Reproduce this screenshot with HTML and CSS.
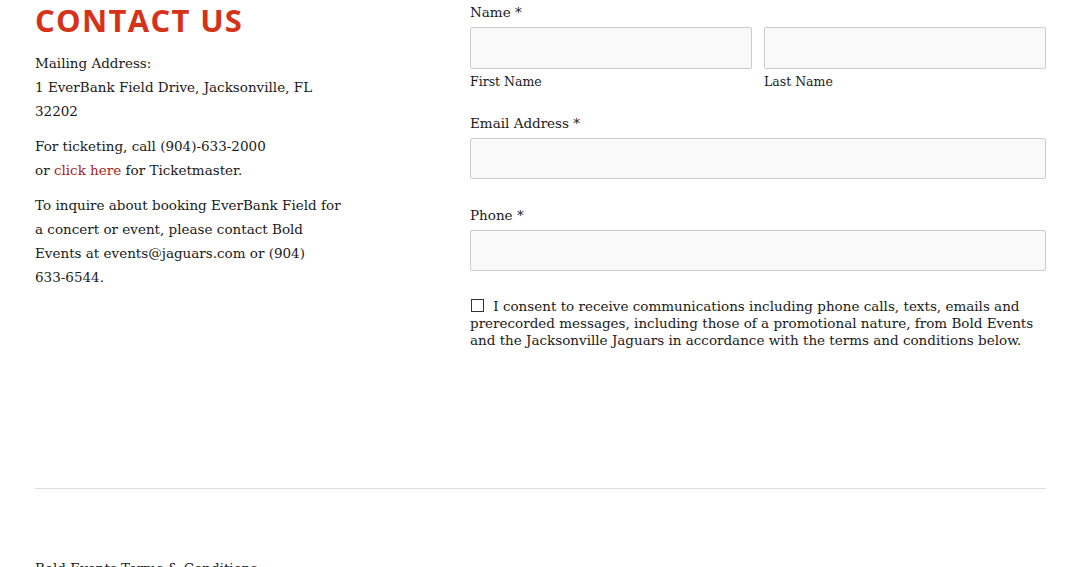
FILE: index.html
```html
<!DOCTYPE html>
<html lang="en">
<head>
  <meta charset="UTF-8">
  <title>Contact Us</title>
  <link rel="stylesheet" href="styles.css">
</head>
<body>

  <div class="page">
    <div class="contact">
      <div class="info">
        <h1>CONTACT US</h1>
        <p>Mailing Address:<br>1 EverBank Field Drive, Jacksonville, FL 32202</p>
        <p>For ticketing, call (904)-633-2000<br>or <a href="#">click here</a> for Ticketmaster.</p>
        <p>To inquire about booking EverBank Field for a concert or event, please contact Bold Events at events@jaguars.com or (904) <span class="nowrap">633-6544.</span></p>
      </div>

      <form class="contact-form">
        <div class="field name-field">
          <label>Name *</label>
          <div class="name-row">
            <div class="name-part">
              <input type="text" id="first">
              <label for="first" class="sub">First Name</label>
            </div>
            <div class="name-part">
              <input type="text" id="last">
              <label for="last" class="sub">Last Name</label>
            </div>
          </div>
        </div>

        <div class="field">
          <label for="email">Email Address *</label>
          <input type="email" id="email">
        </div>

        <div class="field">
          <label for="phone">Phone *</label>
          <input type="tel" id="phone">
        </div>

        <div class="consent">
          <input type="checkbox" id="consent">
          <label for="consent">I consent to receive communications including phone calls, texts, emails and prerecorded messages, including those of a promotional nature, from Bold Events and the Jacksonville Jaguars in accordance with the terms and conditions below.</label>
        </div>
      </form>
    </div>

    <hr>

    <p class="terms">Bold Events Terms &amp; Conditions:</p>
  </div>

</body>
</html>
```

FILE: styles.css
```css
* {
  box-sizing: border-box;
}

body {
  margin: 0;
  font-family: "DejaVu Serif", serif;
  font-size: 13.5px;
  color: #1a1a1a;
  background: #fff;
}

.page {
  padding: 0 35px;
}

.contact {
  display: flex;
  gap: 125px;
}

.info {
  width: 310px;
  flex-shrink: 0;
  line-height: 24px;
}

h1 {
  font-family: "Open Sans", sans-serif;
  font-weight: 700;
  font-size: 31px;
  letter-spacing: 1.3px;
  line-height: 40px;
  color: #d6321a;
  margin: 0 0 11px;
}

.info p {
  margin: 0 0 11px;
}

.info a {
  color: #a3251b;
  text-decoration: none;
}

.nowrap {
  white-space: nowrap;
}

.contact-form {
  flex: 1;
}

.field {
  margin-bottom: 24px;
}

.field > label {
  display: block;
  line-height: 24px;
  margin-bottom: 3px;
}

input[type="text"], input[type="email"], input[type="tel"] {
  display: block;
  width: 100%;
  height: 41px;
  background: #f9f9f9;
  border: 1px solid #ccc;
  border-radius: 2px;
}

.name-field {
  margin-bottom: 19px;
}

.name-row {
  display: flex;
  gap: 12px;
}

.name-row input[type="text"] {
  height: 42px;
}

.name-part {
  flex: 1;
}

.sub {
  display: block;
  font-size: 12.5px;
  line-height: 20px;
  margin-top: 3px;
}

.consent {
  margin-top: 27px;
  line-height: 17px;
}

.consent input {
  -webkit-appearance: none;
  appearance: none;
  width: 13px;
  height: 13px;
  margin: 0 5px 0 1px;
  border: 1px solid #333;
  background: #fff;
  vertical-align: -1px;
}

hr {
  border: none;
  border-top: 1px solid #ddd;
  margin: 139px 0 0;
}

.terms {
  margin-top: 71px;
}
```
